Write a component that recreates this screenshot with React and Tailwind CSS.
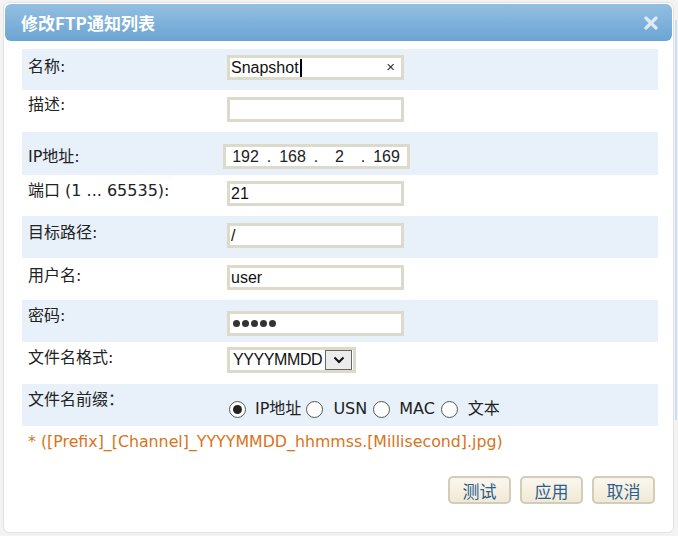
import React from "react";

const cjk = { fontFamily: '"DejaVu Sans", "Noto Sans CJK SC", sans-serif' };
const arial = { fontFamily: '"Liberation Sans", Arial, "Noto Sans CJK SC", sans-serif' };

function Row({ blue, h, children }) {
  return (
    <div className={`flex items-start ${blue ? "bg-[#e8f1f9]" : "bg-white"} ${h}`}>
      {children}
    </div>
  );
}

function Label({ pt, children }) {
  return (
    <div className={`w-[205px] shrink-0 pl-[6px] text-[16px] leading-[20px] text-[#222] ${pt}`} style={cjk}>
      {children}
    </div>
  );
}

function Box({ mt, w = "w-[177px]", children, extra = "" }) {
  return (
    <div
      className={`${mt} ${w} h-[25px] border-[3px] border-[#dcdacb] bg-white flex items-center text-[16px] text-[#111] ${extra}`}
      style={arial}
    >
      {children}
    </div>
  );
}

function Radio({ checked }) {
  return (
    <span className="inline-flex w-[17px] h-[17px] rounded-full border border-[#555] bg-white items-center justify-center">
      {checked && <span className="w-[9px] h-[9px] rounded-full bg-[#222]" />}
    </span>
  );
}

export default function App() {
  return (
    <div className="w-[678px] h-[536px] bg-[#f3f3f3] overflow-hidden relative">
      <div className="absolute right-[1px] top-[20px] w-[2px] h-[400px] bg-[#c9def0]" />
      <div className="ml-[3px] mt-[2px] w-[671px] h-[531px] bg-white border border-[#e2e2e2] rounded-[6px] relative p-[1px]">
        <div className="h-[37px] rounded-[6px] bg-gradient-to-b from-[#93bfe1] to-[#6ba4d3] flex items-center justify-between pl-[16px] pr-[14px]">
          <span className="text-white font-bold text-[17px]" style={{ fontFamily: '"Noto Sans CJK SC", "DejaVu Sans", sans-serif' }}>
            修改FTP通知列表
          </span>
          <svg width="14" height="14" viewBox="0 0 14 14">
            <path d="M2 2 L12 12 M12 2 L2 12" stroke="#dfe9f2" strokeWidth="3.2" strokeLinecap="round" />
          </svg>
        </div>
        <div className="ml-[17px] mt-[8px] w-[636px]">
          <Row blue h="h-[41px]">
            <Label pt="pt-[8px]">名称:</Label>
            <Box mt="mt-[6px]" extra="pl-[1px] justify-between pr-[6px]">
              <span className="flex items-center">
                Snapshot<span className="w-[2px] h-[18px] bg-black ml-[1px]" />
              </span>
              <span className="text-[15px] text-[#333]">×</span>
            </Box>
          </Row>
          <Row h="h-[42px]">
            <Label pt="pt-[5px]">描述:</Label>
            <Box mt="mt-[7px]" />
          </Row>
          <Row blue h="h-[43px]">
            <Label pt="pt-[15px]">IP地址:</Label>
            <div className="-ml-[4px]">
              <Box mt="mt-[12px]" w="w-[187px]" extra="pl-[1px] text-[#222]">
                <span className="w-[37px] text-center">192</span>
                <span className="w-[10px] text-center">.</span>
                <span className="w-[37px] text-center">168</span>
                <span className="w-[10px] text-center">.</span>
                <span className="w-[37px] text-center">2</span>
                <span className="w-[10px] text-center">.</span>
                <span className="w-[37px] text-center">169</span>
              </Box>
            </div>
          </Row>
          <Row h="h-[41px]">
            <Label pt="pt-[6px]">端口 (1 ... 65535):</Label>
            <Box mt="mt-[6px]" extra="pl-[1px]">21</Box>
          </Row>
          <Row blue h="h-[42px]">
            <Label pt="pt-[7px]">目标路径:</Label>
            <Box mt="mt-[7px]" extra="pl-[1px]">/</Box>
          </Row>
          <Row h="h-[42px]">
            <Label pt="pt-[8px]">用户名:</Label>
            <Box mt="mt-[7px]" extra="pl-[1px]">user</Box>
          </Row>
          <Row blue h="h-[42px]">
            <Label pt="pt-[6px]">密码:</Label>
            <Box mt="mt-[11px]" extra="pl-[3px]">
              <span className="flex gap-[2px]">
                {[0, 1, 2, 3, 4].map((i) => (
                  <span key={i} className="w-[7px] h-[7px] rounded-full bg-[#333]" />
                ))}
              </span>
            </Box>
          </Row>
          <Row h="h-[42px]">
            <Label pt="pt-[6px]">文件名格式:</Label>
            <Box mt="mt-[5px]" w="w-[129px]" extra="h-[26px] pl-[3px] justify-between pr-[1px]">
              <span className="tracking-[-0.4px]">YYYYMMDD</span>
              <span className="w-[27px] h-[20px] border border-[#666] bg-[#ececec] flex items-center justify-center">
                <svg width="12" height="8" viewBox="0 0 12 8">
                  <path d="M1.5 1.5 L6 6 L10.5 1.5" fill="none" stroke="#111" strokeWidth="2" />
                </svg>
              </span>
            </Box>
          </Row>
          <Row blue h="h-[42px]">
            <Label pt="pt-[6px]">文件名前缀：</Label>
            <div className="mt-[13px] ml-[2px] flex items-center text-[16px] text-[#222]" style={cjk}>
              <Radio checked />
              <span className="ml-[9px]">IP地址</span>
              <span className="ml-[5px] flex"><Radio /></span>
              <span className="ml-[10px]">USN</span>
              <span className="ml-[6px] flex"><Radio /></span>
              <span className="ml-[9px]">MAC</span>
              <span className="ml-[6px] flex"><Radio /></span>
              <span className="ml-[10px]">文本</span>
            </div>
          </Row>
          <div className="h-[34px] bg-white pl-[6px] pt-[6px] text-[15.8px] leading-[20px] text-[#d9731a]" style={cjk}>
            * ([Prefix]_[Channel]_YYYYMMDD_hhmmss.[Millisecond].jpg)
          </div>
        </div>
        <div className="mt-[16px] flex justify-end gap-[9px] pr-[17px]">
          {["测试", "应用", "取消"].map((t) => (
            <button
              key={t}
              className="w-[63px] h-[28px] rounded-[5px] border-2 border-[#d4cbb9] bg-gradient-to-b from-[#fbf7ee] to-[#f1e9d6] text-[#2b5f8e] text-[17px] leading-none"
              style={{ fontFamily: '"Noto Sans CJK SC", sans-serif' }}
            >
              {t}
            </button>
          ))}
        </div>
      </div>
    </div>
  );
}
